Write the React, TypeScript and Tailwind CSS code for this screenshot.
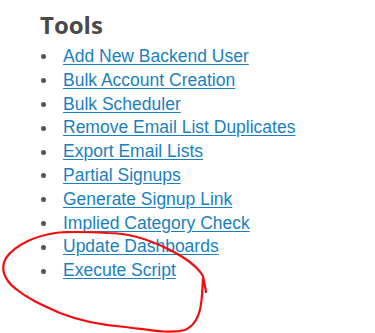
import React from "react";

const tools = [
  "Add New Backend User",
  "Bulk Account Creation",
  "Bulk Scheduler",
  "Remove Email List Duplicates",
  "Export Email Lists",
  "Partial Signups",
  "Generate Signup Link",
  "Implied Category Check",
  "Update Dashboards",
  "Execute Script",
];

export default function App() {
  return (
    <div className="relative w-[375px] h-[333px] overflow-hidden bg-white">
      <div className="pl-10 pt-[10px]">
        <h2 className="text-[24px] leading-[30px] font-bold text-[#4a4a4a] font-['Open_Sans',sans-serif]">
          Tools
        </h2>
        <ul className="mt-[5px] font-['Liberation_Sans',Arial,sans-serif] text-[17.5px] leading-[23.8px]">
          {tools.map((t) => (
            <li key={t} className="flex items-center">
              <span className="w-[23px] flex items-center">
                <span className="block w-[5px] h-[5px] rounded-full bg-[#555] ml-[1px]" />
              </span>
              <a href="#" className="text-[#1a7fc0] underline underline-offset-2">
                {t}
              </a>
            </li>
          ))}
        </ul>
      </div>

      {/* red marker scribble */}
      <svg className="absolute left-0 top-0 pointer-events-none" width="375" height="333" viewBox="0 0 375 333">
        <path
          d="M206 292 L203 276 C196 264 182 256 168 249 C150 240 130 233 108 233 C90 232 72 231 55 233 C35 236 15 245 6 258 C0 268 4 280 16 289 C28 299 42 305 60 313 C80 321 100 325 125 327 C150 330 170 334 185 330 C198 324 201 310 202 295 L203 278"
          fill="none"
          stroke="#f20d0d"
          strokeWidth="2.2"
          strokeLinecap="round"
          strokeLinejoin="round"
        />
      </svg>
    </div>
  );
}
